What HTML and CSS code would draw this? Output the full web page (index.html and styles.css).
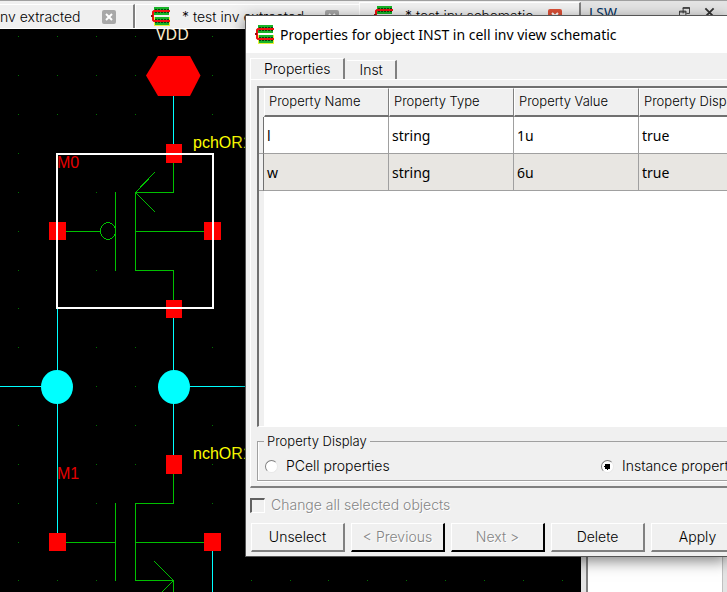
FILE: index.html
```
<!DOCTYPE html>
<html lang="en">
<head>
<meta charset="utf-8">
<title>Schematic editor</title>
<link rel="stylesheet" href="styles.css">
</head>
<body>
<svg class="defs" width="0" height="0" aria-hidden="true">
  <symbol id="chip" viewBox="0 0 20 19">
    <path fill="#e8f03c" d="M3 10h16v9H3z"/>
    <path fill="#18b428" d="M3 0h15v8H3zM4 10h14v8H4z"/>
    <path stroke="#0c3c10" stroke-dasharray="2 1" d="M4 2.500h14M4 5.500h14M4 12.500h14M4 15.500h14"/>
    <path fill="none" stroke="#f01010" stroke-width="2" d="M19 4H3L2 5V13L3 14H19"/>
    <path fill="#901010" d="M0 8h2v2H0z"/>
  </symbol>
  <symbol id="cross" viewBox="0 0 14 14">
    <path fill="none" stroke="currentColor" stroke-width="2" d="M4 4l6 6M10 4l-6 6"/>
  </symbol>
</svg>
<div class="app">
  <main class="editor">
    <div class="tabs">
      <div class="tab tab-first"><button class="tab-name">nv extracted</button><button class="close" aria-label="Close"><svg><use href="#cross"/></svg></button></div>
      <div class="tab tab-second"><svg class="chip"><use href="#chip"/></svg><button class="tab-name">* test inv extracted</button><button class="close" aria-label="Close"><svg><use href="#cross"/></svg></button></div>
      <div class="tab tab-active"><svg class="chip"><use href="#chip"/></svg><button class="tab-name">* test inv schematic</button><button class="close close-red" aria-label="Close"><svg><use href="#cross"/></svg></button></div>
    </div>
    <div class="canvas">
      <svg class="schematic" width="900" height="563" viewBox="0 29 900 563">
        <defs><path id="dots" d="M18 0h1M57 0h1M96 0h1M135 0h1M173 0h1M212 0h1M251 0h1M290 0h1M328 0h1M367 0h1M406 0h1M445 0h1M484 0h1M523 0h1M562 0h1"/></defs>
        <g class="grid">
          <use href="#dots" y="36.500"/><use href="#dots" y="75.500"/><use href="#dots" y="114.500"/><use href="#dots" y="347.500"/><use href="#dots" y="386.500"/><use href="#dots" y="425.500"/><use href="#dots" y="464.500"/><use href="#dots" y="580.500"/>
          <path d="M18 153.500h1M18 192.500h1M96 192.500h1M18 231.500h1M18 270.500h1M96 270.500h1M18 308.500h1M18 503.500h1M96 503.500h1M212 503.500h1M18 542.500h1"/>
        </g>
        <g class="wire">
          <path d="M173.500 96V144M173.500 318V455M57.500 309V533M0 386.500H41M190 386.500H260M212.500 551V592"/>
        </g>
        <g class="device">
          <path d="M173.500 163V192.500H135.500V270.500H173.500V300M115.500 192V271M66 231.500H100M135 231.500H204M155 172L135.500 192.500L155 212"/>
          <ellipse cx="108" cy="231" rx="7.500" ry="8.500"/>
          <path d="M173.500 474V503.500H135.500V580.500H173.500V592M115.500 503V581M66 542.500H115M135 542.500H204M154 561L173.500 580.500L154 600"/>
        </g>
        <g class="pins">
          <path d="M146 75.500L158 56H190L200.500 75.500L190 96H158Z"/>
          <path d="M166 144h16v19h-16zM166 300h16v18h-16zM49 222h17v18H49zM204 222h17v18h-17zM166 455h16v19h-16zM49 533h17v18H49zM204 533h17v18h-17z"/>
        </g>
        <g class="nodes"><ellipse cx="57" cy="387" rx="16" ry="17"/><ellipse cx="174" cy="387" rx="16" ry="17"/></g>
        <path class="selection" d="M57 154H213V308H57Z"/>
        <text class="label vdd" x="156" y="40">VDD</text>
        <text class="label model" x="193" y="148">pchOR1</text>
        <text class="label model" x="193" y="459">nchOR1</text>
        <text class="label name" x="57" y="168">M0</text>
        <text class="label name" x="57" y="479">M1</text>
      </svg>
    </div>
  </main>
  <aside class="dock">
    <header class="dock-head"><span>LSW</span>
      <svg class="dock-icon" viewBox="0 0 12 12"><path fill="none" stroke="#333" d="M4.500 7V.5h7V7H8M4 1.500h8M.5 4.500h7v6h-7zM0 5.500h8"/></svg>
      <svg class="dock-icon" viewBox="0 0 12 12"><path stroke="#333" stroke-width="2" d="M1.500 1.500l9 9M10.500 1.500l-9 9"/></svg>
    </header>
    <div class="layers"></div>
  </aside>
</div>

<section class="dialog" role="dialog" aria-labelledby="dialog-title">
  <header class="title"><svg class="chip"><use href="#chip"/></svg><h1 id="dialog-title">Properties for object INST in cell inv view schematic</h1></header>
  <div class="body">
    <div class="pages"><button class="page page-on">Properties</button><button class="page">Inst</button></div>
    <div class="pane">
      <div class="list">
        <table>
          <thead><tr><td class="grip"></td><th>Property Name</th><th>Property Type</th><th>Property Value</th><th class="last">Property Display</th></tr></thead>
          <tbody>
            <tr><td class="grip"></td><td>l</td><td>string</td><td>1u</td><td class="last">true</td></tr>
            <tr class="alt"><td class="grip"></td><td>w</td><td>string</td><td>6u</td><td class="last">true</td></tr>
          </tbody>
        </table>
      </div>
      <fieldset>
        <legend>Property Display</legend>
        <label><input type="radio" name="display">PCell properties</label>
        <label><input type="radio" name="display" checked>Instance properties</label>
      </fieldset>
    </div>
    <label class="all off"><input type="checkbox" disabled>Change all selected objects</label>
    <div class="actions">
      <button>Unselect</button><button class="heavy off" disabled>&lt; Previous</button><button class="heavy off" disabled>Next &gt;</button><button>Delete</button><button>Apply</button>
    </div>
  </div>
</section>
</body>
</html>
```
FILE: styles.css
```
* { box-sizing: border-box; }
body {
  margin: 0;
  height: 100vh;
  overflow: hidden;
  position: relative;
  background: #f0f0f0;
  color: #000;
  font: 300 14px/16px Inter, "Liberation Sans", sans-serif;
}
button {
  padding: 0;
  border: 0;
  background: none;
  color: inherit;
  font: inherit;
  white-space: nowrap;
}
.defs { position: absolute; }
.app { display: flex; height: 100%; border-top: 1px solid #a0a0a0; }

.editor { flex: 1; min-width: 0; display: flex; flex-direction: column; }
.tabs { display: flex; align-items: flex-end; height: 28px; padding-top: 1px; border-bottom: 1px solid #fff; }
.tab {
  display: flex;
  align-items: center;
  height: 24px;
  border-top: 1px solid #fff;
  border-right: 2px solid #808080;
}
.tab-first { width: 135px; }
.tab-first .close { margin-left: auto; margin-right: 17px; }
.tab-second { width: 224px; padding-left: 15px; border-right: 0; border-left: 1px solid #fff; }
.tab-active { flex: 1; height: 26px; padding: 0 17px 0 14px; border-left: 1px solid #fff; }
.tab .chip { margin-right: 11px; }
.tab-second .close { margin-left: auto; margin-right: 20px; }
.tab-active .close { margin-left: auto; }
.chip { width: 20px; height: 19px; flex: none; }
.close { flex: none; width: 14px; height: 14px; border-radius: 2px; background: #a8a8a8; color: #fff; }
.close svg { display: block; width: 14px; height: 14px; }
.close-red { background: #dc5037; }

.canvas { flex: 1; min-height: 0; overflow: hidden; background: #000; }
.schematic { display: block; }
.grid, .wire, .device { fill: none; shape-rendering: crispEdges; }
.grid { stroke: #007000; }
.wire { stroke: #00ffff; }
.device { stroke: #00c000; }
.pins { fill: #ff0000; }
.nodes { fill: #00ffff; }
.selection { fill: none; stroke: #fff; stroke-width: 2; }
.label { font: 400 16px "Liberation Sans", sans-serif; }
.vdd { fill: #ffeccc; font-family: "Noto Sans", sans-serif; }
.model { fill: #ffff00; }
.name { fill: #e60000; }

.dock { width: 146px; display: flex; flex-direction: column; background: #e4e4e4; }
.dock-head {
  display: flex;
  align-items: center;
  gap: 14px;
  height: 28px;
  padding: 0 12px 5px 8px;
  background: #e4e4e4;
  font: 400 14px/20px "Noto Sans", sans-serif;
  color: #003060;
}
.dock-head span { flex: 1; }
.dock-icon { width: 11px; height: 11px; }
.layers { flex: 1; margin: 0 4px 0 5px; border-left: 2px solid #808080; border-right: 1px solid #c0c0c0; background: #fff; }

.dialog {
  position: absolute;
  left: 245px;
  right: 0;
  top: 15px;
  overflow: hidden;
  border: 1px solid #555;
  border-right: 0;
  background: #f0f0f0;
  box-shadow: 0 4px 14px rgba(0, 0, 0, .5);
}
.title { display: flex; align-items: center; gap: 5px; height: 37px; padding-left: 9px; background: #fff; }
h1 { margin: 0; font: 400 14px/20px "Noto Sans", sans-serif; white-space: nowrap; }
.body { padding: 5px 0 4px 4px; }
.pages { display: flex; align-items: flex-end; height: 21px; }
.page { height: 19px; padding: 0 12px; border-top: 1px solid #fff; border-right: 2px solid #808080; }
.page-on { height: 21px; padding: 0 13px; margin-right: 2px; border-left: 1px solid #fff; }
.pane { padding: 6px 0 0 6px; border: solid #fff; border-width: 1px 0 0 1px; border-bottom: 2px solid #808080; }
.list {
  height: 341px;
  overflow: hidden;
  border: 2px solid #707070;
  border-right: 0;
  border-bottom: 1px solid #fff;
  background: linear-gradient(90deg, #f0f0f0 5px, #fff 5px);
}
table { width: 100%; table-layout: fixed; border-collapse: separate; border-spacing: 0; }
th {
  width: 125px;
  height: 29px;
  padding: 0 0 2px 4px;
  border: solid #fff;
  border-width: 1px 1px 2px 1px;
  border-right-color: #808080;
  border-bottom-color: #707070;
  background: #f0f0f0;
  font-size: 13px;
  font-weight: 300;
  text-align: left;
  white-space: nowrap;
}
td {
  height: 37px;
  padding: 2px 3px 0;
  border: solid #a0a0a0;
  border-width: 0 1px 1px 0;
  background: #fff;
  font: 400 14px/20px "Noto Sans", sans-serif;
}
.last { width: auto; overflow: hidden; border-right: 0; }
.alt td { background: #e8e6e2; }
.grip, .alt .grip { width: 5px; padding: 0; border-right-color: #707070; background: #f0f0f0; }
thead .grip { height: 29px; border: 0; }
fieldset {
  display: flex;
  min-width: 0;
  height: 48px;
  margin: 6px 0 5px;
  padding: 1px 0 0 7px;
  border: 1px solid #a0a0a0;
  border-right: 0;
  box-shadow: inset 1px 0 #fff, 0 1px #fff;
}
legend { margin-left: -1px; padding: 0 3px; font-size: 13px; }
label { display: flex; align-items: center; gap: 8px; white-space: nowrap; }
fieldset label { flex: none; width: 336px; height: 32px; }
input { appearance: none; flex: none; margin: 0; border: solid #808080; }
input[type="radio"] {
  width: 13px;
  height: 13px;
  border-width: 1px;
  border-color: #808080 #e8e8e8 #e8e8e8 #808080;
  border-radius: 50%;
  background: #fff;
}
input[type="radio"]:checked { background: radial-gradient(circle, #000 3px, #fff 3px); }
input[type="checkbox"] {
  width: 15px;
  height: 15px;
  border-width: 2px 1px 1px 2px;
  border-color: #606060 #fff #fff #606060;
  background: #f0f0f0;
}
.off { color: #858585; text-shadow: 1px 1px #fff; }
.all { height: 16px; margin-top: 9px; gap: 6px; }
.actions { display: flex; gap: 6px; margin: 10px 0 0 1px; }
.actions button {
  flex: none;
  width: 94px;
  height: 29px;
  border: solid #fff;
  border-width: 1px 2px 2px 1px;
  border-right-color: #808080;
  border-bottom-color: #808080;
}
.actions .heavy { border-right-color: #000; border-bottom-color: #000; }
```
